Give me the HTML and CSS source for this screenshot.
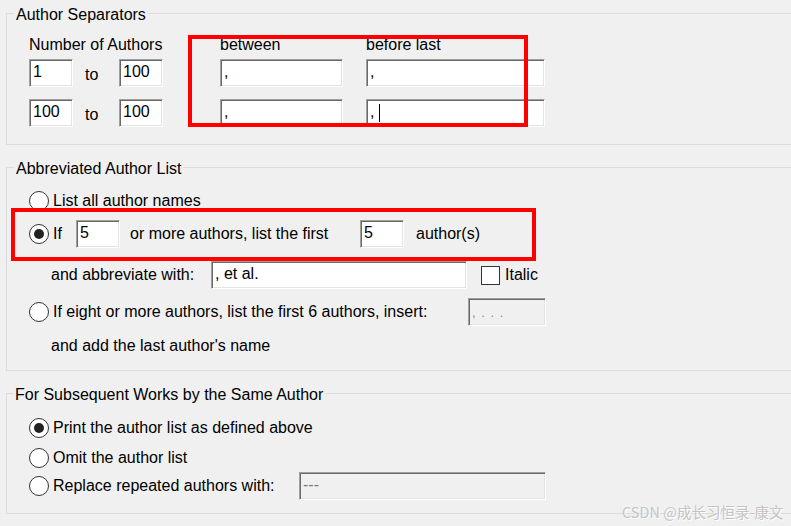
FILE: index.html
```html
<!DOCTYPE html>
<html>
<head>
<meta charset="utf-8">
<link rel="stylesheet" href="styles.css">
</head>
<body>
<div class="group g1">
  <div class="legend">Author Separators</div>
  <div class="row hdr">
    <span class="c-num">Number of Authors</span>
    <span class="c-between">between</span>
    <span>before last</span>
  </div>
  <div class="row r1">
    <div class="edit w44">1</div><span class="to">to</span><div class="edit w44">100</div>
    <span class="sp57"></span><div class="edit w123">,</div><span class="sp23"></span><div class="edit w179">,</div>
  </div>
  <div class="row r2">
    <div class="edit w44">100</div><span class="to">to</span><div class="edit w44">100</div>
    <span class="sp57"></span><div class="edit w123">,</div><span class="sp23"></span><div class="edit w179">,<span class="caret"></span></div>
  </div>
</div>

<div class="group g2">
  <div class="legend">Abbreviated Author List</div>
  <div class="row ra"><span class="radio"></span><span class="rlabel">List all author names</span></div>
  <div class="row rb">
    <span class="radio on"></span><span class="rlabel if">If</span>
    <div class="edit w44">5</div>
    <span class="t-more">or more authors, list the first</span>
    <div class="edit w44">5</div>
    <span class="t-auth">author(s)</span>
  </div>
  <div class="row flush rc">
    <span class="t-abbr">and abbreviate with:</span>
    <div class="edit w256">, et al.</div>
    <span class="check"></span><span class="t-italic">Italic</span>
  </div>
  <div class="row rd">
    <span class="radio"></span><span class="rlabel t-eight">If eight or more authors, list the first 6 authors, insert:</span>
    <div class="edit w78 disabled"><span class="dots">, . . .</span></div>
  </div>
  <div class="row flush re"><span class="t-add">and add the last author's name</span></div>
</div>

<div class="group g3">
  <div class="legend">For Subsequent Works by the Same Author</div>
  <div class="row s1"><span class="radio on"></span><span class="rlabel">Print the author list as defined above</span></div>
  <div class="row s2"><span class="radio"></span><span class="rlabel">Omit the author list</span></div>
  <div class="row s3">
    <span class="radio"></span><span class="rlabel t-replace">Replace repeated authors with:</span>
    <div class="edit w247 disabled">---</div>
  </div>
</div>

<div class="annot a1"></div>
<div class="annot a2"></div>
<div class="watermark">CSDN @成长习恒录-康文</div>
</body>
</html>
```

FILE: styles.css
```css
html, body {
  margin: 0;
  padding: 0;
}
body {
  position: relative;
  width: 791px;
  height: 526px;
  overflow: hidden;
  background: #f0f0f0;
  padding-top: 13px;
  box-sizing: border-box;
  font-family: "Liberation Sans", Arial, sans-serif;
  font-size: 16px;
  line-height: 18px;
  color: #000;
}
.group {
  position: relative;
  margin-left: 6px;
  margin-right: -30px;
  border: 1px solid #dcdcdc;
  display: flex;
  flex-direction: column;
}
.g2, .g3 { margin-top: 22px; }
.legend {
  position: absolute;
  top: -8px;
  left: 7px;
  padding: 0 2px;
  background: #f0f0f0;
  white-space: nowrap;
}
.g3 .legend { left: 6px; }
.row {
  display: flex;
  align-items: center;
  height: 28px;
  padding-left: 22px;
  white-space: nowrap;
}
.row.flush { padding-left: 0; }

/* group 1 */
.g1 { padding-top: 22px; padding-bottom: 17px; }
.g1 .hdr { height: 18px; }
.c-num { width: 191px; }
.c-between { width: 146px; }
.r1 { margin-top: 5px; }
.r2 { margin-top: 12px; }
.to { width: 46px; box-sizing: border-box; padding-left: 12px; padding-top: 3px; }
.sp57 { width: 57px; }
.sp23 { width: 23px; }

.edit {
  height: 28px;
  box-sizing: border-box;
  background: #fff;
  border: 1px solid;
  border-color: #a0a0a0 #fff #fff #a0a0a0;
  box-shadow: inset 1px 1px 0 #696969, inset -1px -1px 0 #e3e3e3;
  display: flex;
  align-items: center;
  padding: 0 0 2px 3px;
  flex-shrink: 0;
}
.edit.disabled { background: #f0f0f0; color: #7a7a7a; }
.w44 { width: 44px; }
.w123 { width: 123px; }
.w179 { width: 179px; }
.w256 { width: 256px; }
.w78 { width: 78px; }
.w247 { width: 247px; }
.caret {
  display: inline-block;
  width: 0;
  height: 18px;
  border-left: 1px solid #000;
  margin-left: 5px;
  margin-top: 2px;
}
.dots { font-size: 13px; color: #8a8a8a; letter-spacing: 1px; padding-top: 4px; }

/* radios / checks */
.radio {
  width: 20px;
  height: 20px;
  box-sizing: border-box;
  border: 1px solid #333;
  border-radius: 50%;
  background: #fff;
  flex-shrink: 0;
  display: flex;
  align-items: center;
  justify-content: center;
}
.radio.on::after {
  content: "";
  width: 10px;
  height: 10px;
  border-radius: 50%;
  background: #222;
}
.rlabel { margin-left: 4px; }
.check {
  width: 19px;
  height: 19px;
  box-sizing: border-box;
  border: 1px solid #333;
  background: #fff;
  flex-shrink: 0;
  margin-left: 14px;
}
.t-italic { margin-left: 5px; }

/* group 2 */
.g2 { padding-top: 19px; padding-bottom: 10px; }
.rb { margin-top: 5px; }
.rc { margin-top: 13px; }
.rd { margin-top: 9px; }
.re { margin-top: 6px; }
.if { width: 23px; }
.t-more { width: 240px; box-sizing: border-box; padding-left: 10px; }
.t-auth { margin-left: 12px; }
.t-abbr { width: 204px; box-sizing: border-box; padding-left: 44px; }
.t-add { padding-left: 44px; }
.t-eight { width: 415px; }

/* group 3 */
.g3 { padding-top: 20px; padding-bottom: 13px; }
.s2 { margin-top: 2px; }
.t-replace { width: 246px; }

/* annotations */
.annot {
  position: absolute;
  box-sizing: border-box;
  border: 4px solid #ff0000;
}
.a1 { left: 188px; top: 35px; width: 340px; height: 92px; }
.a2 { left: 11px; top: 208px; width: 525px; height: 53px; }

.watermark {
  position: absolute;
  left: 622px;
  top: 502px;
  font-family: "Noto Sans CJK SC", "Liberation Sans", sans-serif;
  font-size: 14.5px;
  line-height: 20px;
  color: #c4c4c4;
  text-shadow: 1px 1px 0 #fff;
  white-space: nowrap;
}
```
